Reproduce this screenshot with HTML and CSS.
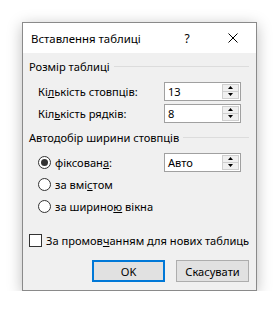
FILE: index.html
```html
<!DOCTYPE html>
<html lang="uk">
<head>
<meta charset="utf-8">
<title>Вставлення таблиці</title>
<link rel="stylesheet" href="styles.css">
</head>
<body>
<div class="dialog">
  <div class="titlebar">
    <span class="title">Вставлення таблиці</span>
    <span class="tb-btn">?</span>
    <span class="tb-btn"><svg width="10" height="10" viewBox="0 0 10 10"><path d="M0.5 0.5L9.5 9.5M9.5 0.5L0.5 9.5" stroke="#000" stroke-width="1" fill="none"/></svg></span>
  </div>
  <div class="content">
    <div class="group-head"><span>Розмір таблиці</span><span class="rule"></span></div>
    <div class="row indent">
      <span class="label">Кі<u>л</u>ькість стовпців:</span>
      <div class="spin"><span class="val">13</span><span class="arrows"><span class="half"><svg width="5" height="3" viewBox="0 0 5 3"><path d="M2.5 0L5 3H0z" fill="#000"/></svg></span><span class="half"><svg width="5" height="3" viewBox="0 0 5 3"><path d="M0 0H5L2.5 3z" fill="#000"/></svg></span></span></div>
    </div>
    <div class="row indent">
      <span class="label">Кіл<u>ь</u>кість рядків:</span>
      <div class="spin"><span class="val">8</span><span class="arrows"><span class="half"><svg width="5" height="3" viewBox="0 0 5 3"><path d="M2.5 0L5 3H0z" fill="#000"/></svg></span><span class="half"><svg width="5" height="3" viewBox="0 0 5 3"><path d="M0 0H5L2.5 3z" fill="#000"/></svg></span></span></div>
    </div>
    <div class="group-head"><span>Автодобір ширини стовпців</span><span class="rule"></span></div>
    <div class="row indent">
      <span class="radio checked"></span>
      <span class="label">фіксован<u>а</u>:</span>
      <div class="spin"><span class="val">Авто</span><span class="arrows"><span class="half"><svg width="5" height="3" viewBox="0 0 5 3"><path d="M2.5 0L5 3H0z" fill="#000"/></svg></span><span class="half"><svg width="5" height="3" viewBox="0 0 5 3"><path d="M0 0H5L2.5 3z" fill="#000"/></svg></span></span></div>
    </div>
    <div class="row indent">
      <span class="radio"></span>
      <span class="label">за вмі<u>с</u>том</span>
    </div>
    <div class="row indent">
      <span class="radio"></span>
      <span class="label">за ширино<u>ю</u> вікна</span>
    </div>
    <div class="row check-row">
      <span class="checkbox"></span>
      <span class="label">За промов<u>ч</u>анням для нових таблиць</span>
    </div>
    <div class="buttons">
      <button class="btn default">OK</button>
      <button class="btn">Скасувати</button>
    </div>
  </div>
</div>
</body>
</html>
```
FILE: styles.css
```css
html, body {
  margin: 0;
  background: #fff;
}
body {
  font-family: "Noto Sans", "Open Sans", sans-serif;
  font-size: 11.1px;
  color: #000;
}
.dialog {
  box-sizing: border-box;
  width: 235px;
  margin: 22px 0 0 22px;
  border: 1px solid #8a8a8a;
  background: #f0f0f0;
  box-shadow: 0 3px 14px rgba(0, 0, 0, 0.26);
}
.titlebar {
  height: 30px;
  background: #fff;
  display: flex;
  align-items: center;
}
.title {
  flex: 1;
  padding-left: 8px;
  font-size: 11.4px;
}
.tb-btn {
  width: 46px;
  height: 30px;
  display: flex;
  align-items: center;
  justify-content: center;
  font-size: 12px;
}
.content {
  padding: 0 7px 8px 6px;
}
.group-head {
  height: 27px;
  display: flex;
  align-items: center;
  gap: 4px;
}
.rule {
  flex: 1;
  height: 1px;
  background: #dcdcdc;
}
.row {
  height: 22px;
  display: flex;
  align-items: center;
}
.indent {
  padding-left: 9px;
}
.label {
  flex: 1;
  white-space: nowrap;
}
.spin {
  box-sizing: border-box;
  flex-shrink: 0;
  width: 77px;
  height: 19px;
  margin-right: 8px;
  border: 1px solid #a0a0a0;
  background: #fff;
  display: flex;
  align-items: stretch;
}
.val {
  flex: 1;
  padding-left: 3px;
  display: flex;
  align-items: center;
}
.arrows {
  width: 15px;
  margin: 1px;
  display: flex;
  flex-direction: column;
  border: 1px solid #cfcfcf;
  background: #f0f0f0;
}
.half {
  flex: 1;
  display: flex;
  align-items: center;
  justify-content: center;
}
.half + .half {
  border-top: 1px solid #cfcfcf;
}
.half svg {
  display: block;
}
.radio {
  box-sizing: border-box;
  flex-shrink: 0;
  width: 13px;
  height: 13px;
  border: 1px solid #333;
  border-radius: 50%;
  background: #fff;
  margin-right: 4px;
  display: flex;
  align-items: center;
  justify-content: center;
}
.radio.checked::after {
  content: "";
  width: 7px;
  height: 7px;
  border-radius: 50%;
  background: #333;
}
.check-row {
  margin-top: 12px;
}
.checkbox {
  box-sizing: border-box;
  flex-shrink: 0;
  width: 13px;
  height: 13px;
  border: 1px solid #333;
  background: #fff;
  margin-right: 4px;
}
.buttons {
  margin-top: 9px;
  display: flex;
  justify-content: flex-end;
  gap: 11px;
}
.btn {
  box-sizing: border-box;
  width: 73px;
  height: 22px;
  padding: 0;
  font: inherit;
  color: #000;
  background: #e1e1e1;
  border: 1px solid #adadad;
}
.btn.default {
  border: 2px solid #0078d7;
}
```
